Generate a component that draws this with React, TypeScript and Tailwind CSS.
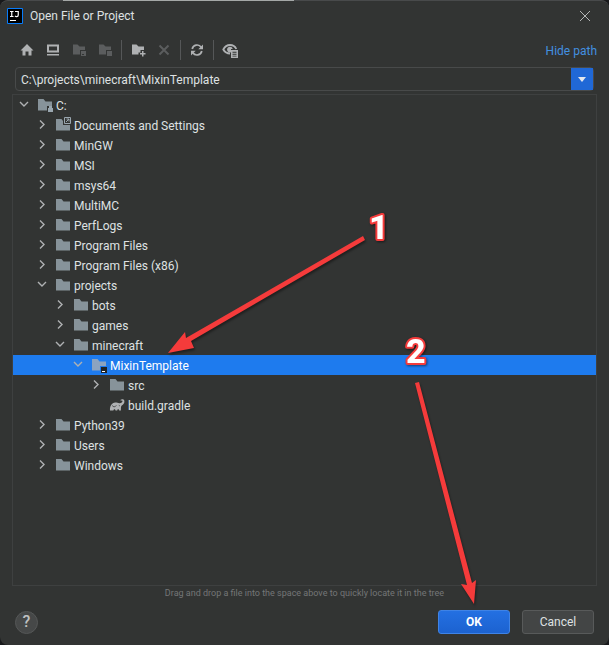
import React, { useState } from "react";

type NodeKind = "folder" | "drive" | "link" | "module" | "gradle";
type TreeNode = { name: string; level: number; kind: NodeKind; state: "open" | "closed" | "leaf" };

const nodes: TreeNode[] = [
  { name: "C:", level: 0, kind: "drive", state: "open" },
  { name: "Documents and Settings", level: 1, kind: "link", state: "closed" },
  { name: "MinGW", level: 1, kind: "folder", state: "closed" },
  { name: "MSI", level: 1, kind: "folder", state: "closed" },
  { name: "msys64", level: 1, kind: "folder", state: "closed" },
  { name: "MultiMC", level: 1, kind: "folder", state: "closed" },
  { name: "PerfLogs", level: 1, kind: "folder", state: "closed" },
  { name: "Program Files", level: 1, kind: "folder", state: "closed" },
  { name: "Program Files (x86)", level: 1, kind: "folder", state: "closed" },
  { name: "projects", level: 1, kind: "folder", state: "open" },
  { name: "bots", level: 2, kind: "folder", state: "closed" },
  { name: "games", level: 2, kind: "folder", state: "closed" },
  { name: "minecraft", level: 2, kind: "folder", state: "open" },
  { name: "MixinTemplate", level: 3, kind: "module", state: "open" },
  { name: "src", level: 4, kind: "folder", state: "closed" },
  { name: "build.gradle", level: 4, kind: "gradle", state: "leaf" },
  { name: "Python39", level: 1, kind: "folder", state: "closed" },
  { name: "Users", level: 1, kind: "folder", state: "closed" },
  { name: "Windows", level: 1, kind: "folder", state: "closed" },
];

const indents = ["pl-[3px]", "pl-[21px]", "pl-[39px]", "pl-[57px]", "pl-[75px]"];

function Icon({ children }: { children: React.ReactNode }) {
  return (
    <svg viewBox="0 0 16 16" className="block size-4 shrink-0" fill="currentColor" aria-hidden="true">
      {children}
    </svg>
  );
}

const folderPath = "M1 2H6.5L8.5 4.5H15V13.5H1Z";

function NodeIcon({ kind }: { kind: NodeKind }) {
  if (kind === "gradle") {
    return (
      <span className="text-[#afb1b3]">
        <Icon>
          <path d="M1 13.5C.7 9.500 2.200 6.400 5.300 5.700C7.300 5.200 9 6.300 10.600 6.200C12.300 6 13.600 5 13.500 4C13.400 3.200 12.600 3.300 12 3.800L11.400 3C12.800 1.700 15.300 2 15.400 4.200C15.500 6.300 14.200 7.600 12.800 8.400C12 9 11.900 10 11.900 13.500H10.200C10 11.800 8.400 11.800 8.200 13.500H6.500C6.300 11.800 4.700 11.800 4.400 13.500Z" />
          <path d="M3.200 8.500C4.300 10.200 6.300 10.200 7.300 8.400M9.800 8.300L10.800 8.900" fill="none" stroke="#323433" strokeWidth=".8" />
        </Icon>
      </span>
    );
  }
  return (
    <span className={kind === "module" ? "text-[#8ba3c0]" : "text-[#87939a]"}>
      <Icon>
        {kind === "folder" && <path d={folderPath} />}
        {kind === "drive" && (
          <>
            <path d="M1 2H6.500L8.500 4.500H15V9H10V13.500H1Z" />
            <path d="M11 11H12V9H15V11H16V15H11Z" fill="#9aa7b0" />
          </>
        )}
        {kind === "link" && (
          <>
            <path d="M1 2H6.500L8 4V8H15V13.500H1Z" />
            <path d="M9.500.5H15.500V6.500H9.500ZM11 5L14 2M11.500 2H14V4.500" fill="none" stroke="#9aa7b0" />
          </>
        )}
        {kind === "module" && (
          <>
            <path d="M1 2H6.500L8.500 4.500H15V9H9V13.500H1Z" />
            <path d="M10 10H16V16H10Z" fill="#202326" />
            <path d="M11 14H14V15H11Z" fill="#fff" />
          </>
        )}
      </Icon>
    </span>
  );
}

function Row({ node, selected, onSelect }: { node: TreeNode; selected: boolean; onSelect: () => void }) {
  return (
    <li
      role="treeitem"
      aria-level={node.level + 1}
      aria-selected={selected}
      aria-expanded={node.state === "leaf" ? undefined : node.state === "open"}
      onClick={onSelect}
      className={`flex h-5 items-center ${indents[node.level]} ${selected ? "bg-[#1e7bee] text-white" : ""}`}
    >
      <button type="button" tabIndex={-1} aria-label={`Toggle ${node.name}`} className="mr-[5px] size-4 text-[#afb1b3]">
        <Icon>
          {node.state === "closed" && <path d="M6 3.500L10 7.500L6 11.500" fill="none" stroke="currentColor" strokeWidth="1.400" />}
          {node.state === "open" && <path d="M4 5L8 9L12 5" fill="none" stroke="currentColor" strokeWidth="1.400" />}
        </Icon>
      </button>
      <NodeIcon kind={node.kind} />
      <span className="ml-[3px] whitespace-nowrap pt-px">{node.name}</span>
    </li>
  );
}

function Tool({ label, disabled, children }: { label: string; disabled?: boolean; children: React.ReactNode }) {
  return (
    <button type="button" aria-label={label} disabled={disabled} className="text-[#afb1b3] disabled:text-[#5b5d5e]">
      <Icon>{children}</Icon>
    </button>
  );
}

function Separator() {
  return <div className="-mx-[2px] h-5 w-px bg-[#555758]" />;
}

function Annotations() {
  return (
    <svg className="pointer-events-none absolute left-0 top-0 h-[645px] w-[609px]" viewBox="0 0 609 645" aria-hidden="true">
      <g className="drop-shadow-[1px_2px_1px_rgba(0,0,0,0.4)]" fill="#f53b3b">
        <path d="M363 235L365 239L191 340L194 347L168 352L185 331L186 337Z" />
        <path d="M415 382L419 381L472 582L476 579L474 603L461 583L467 584Z" />
      </g>
      <g
        className="font-[Roboto,Arial,sans-serif] text-[34px] font-extrabold drop-shadow-[1px_1px_1px_rgba(0,0,0,0.5)]"
        fill="#fff"
        stroke="#f53b3b"
        strokeWidth="4"
        strokeLinejoin="round"
        paintOrder="stroke"
      >
        <text x="369" y="238">1</text>
        <text x="406" y="362">2</text>
      </g>
    </svg>
  );
}

export default function App() {
  const [selected, setSelected] = useState("MixinTemplate");
  const [path, setPath] = useState("C:\\projects\\minecraft\\MixinTemplate");
  return (
    <div className="bg-[#18191b] font-[Roboto,'Open_Sans',sans-serif] text-[12px] leading-5 text-[#dfe1e2]">
      <main className="relative flex min-h-screen flex-col rounded-lg border-t border-[#484a4b] bg-[#323433]">
        <div className="absolute -top-px left-[63px] h-px w-[231px] bg-[#a4a8a7]" />
        <header className="flex h-[29px] items-center pl-[7px] pr-[18px]">
          <svg viewBox="0 0 16 16" className="size-4" aria-hidden="true">
            <path d="M.5.5H15.500V15.500H.5Z" fill="#000" stroke="#087cfa" />
            <path d="M3 3.500H6.500M4.750 3.500V8.500M3 8.500H6.500M8 3.500H11.250V7Q11.250 8.600 9.700 8.600Q8.600 8.600 8 7.800M3 12.500H9" fill="none" stroke="#fff" strokeWidth="1.200" />
          </svg>
          <h1 className="ml-[7px] flex-1">Open File or Project</h1>
          <button type="button" aria-label="Close" className="size-3 text-[#b4b6b6]">
            <svg viewBox="0 0 12 12" className="size-3" aria-hidden="true">
              <path d="M1 1L11 11M11 1L1 11" stroke="currentColor" />
            </svg>
          </button>
        </header>

        <div className="flex h-[37px] items-center gap-[10px] pl-[19px] pr-3 pt-[3px]">
          <Tool label="Home"><path d="M8 2L14.500 8.500H12.500V13.500H9.500V9.500H6.500V13.500H3.500V8.500H1.500Z" /></Tool>
          <Tool label="Desktop"><path fillRule="evenodd" d="M2 2.500H14V10.500H2ZM4 4.500V8.500H12V4.500ZM2 12H14V13.500H2Z" /></Tool>
          <Tool label="Project directory" disabled>
            <path d="M2 2.500H6.500L8.500 4.500H14V8H9V12.500H2Z" />
            <path fillRule="evenodd" d="M10 9H15V14H10ZM11 12V13H13V12Z" />
          </Tool>
          <Tool label="Module directory" disabled>
            <path d="M2 2.500H6.500L8.500 4.500H14V8H9V12.500H2Z" />
            <path d="M10 9H15V14H10Z" />
          </Tool>
          <Separator />
          <Tool label="New folder">
            <path d="M2 2.500H6.500L8.500 4.500H14V8H10.500V10.500H8.500V12.500H2Z" />
            <path d="M12 9H13.500V11H15.500V12.500H13.500V14.500H12V12.500H10V11H12Z" />
          </Tool>
          <Tool label="Delete" disabled><path d="M3.500 3.500L12.500 12.500M12.500 3.500L3.500 12.500" stroke="currentColor" strokeWidth="2" /></Tool>
          <Separator />
          <Tool label="Refresh">
            <path d="M3.200 7A5 5 0 0 1 12.200 5.200M12.800 9A5 5 0 0 1 3.800 10.800" fill="none" stroke="currentColor" strokeWidth="1.700" />
            <path d="M14 2.500V7.200H9.300ZM2 13.500V8.800H6.700Z" />
          </Tool>
          <Separator />
          <Tool label="Show hidden files">
            <path d="M8 11.500C5 11.500 2.700 10 1.300 7.500C2.700 4.800 5 3 8 3S13.200 4.500 14.300 7" fill="none" stroke="currentColor" strokeWidth="1.800" />
            <path fillRule="evenodd" d="M8 4.700A2.900 2.900 0 0 1 10.800 7H9V10.300A2.900 2.900 0 1 1 8 4.700ZM9 8H16V16H9ZM10.500 9.800V10.800H14.500V9.800ZM10.500 11.800V12.800H14.500V11.800ZM10.500 13.800V14.600H14.500V13.800Z" />
          </Tool>
          <a href="#path" className="ml-auto pt-px text-[#4290e0]">Hide path</a>
        </div>

        <div className="mx-[15px] flex h-6 rounded-sm border border-[#484a4a]">
          <input
            aria-label="Path"
            value={path}
            onChange={(e) => setPath(e.target.value)}
            className="min-w-0 flex-1 bg-transparent pl-[5px] pt-px outline-none"
          />
          <button type="button" aria-label="Recent paths" className="flex w-[22px] items-center justify-center bg-[#2068d6] text-[#e4e8ee]">
            <svg viewBox="0 0 8 5" className="h-[5px] w-2" aria-hidden="true"><path d="M0 0H8L4 5Z" fill="currentColor" /></svg>
          </button>
        </div>

        <ul role="tree" aria-label="Folders" className="mx-3 mt-[3px] min-h-[492px] flex-1 border border-[#3e4040]">
          {nodes.map((node) => (
            <Row key={node.name} node={node} selected={selected === node.name} onSelect={() => setSelected(node.name)} />
          ))}
        </ul>
        <p className="text-center text-[9px] leading-[14px] text-[#747677]">
          Drag and drop a file into the space above to quickly locate it in the tree
        </p>

        <footer className="flex items-center gap-3 px-[15px] pb-[11px] pt-[10px]">
          <button type="button" aria-label="Help" className="mr-auto flex size-[23px] items-center justify-center rounded-full border border-[#555757] bg-[#464848] text-[16px] font-medium text-[#bfc1c1]">
            ?
          </button>
          <button type="button" className="h-6 w-[72px] rounded-[3px] border border-[#3f83e6] bg-linear-to-b from-[#2470e2] to-[#1c62d0] font-bold text-white">OK</button>
          <button type="button" className="h-6 w-[72px] rounded-[3px] border border-[#585a5a] bg-[#434545]">Cancel</button>
        </footer>
        <Annotations />
      </main>
    </div>
  );
}
